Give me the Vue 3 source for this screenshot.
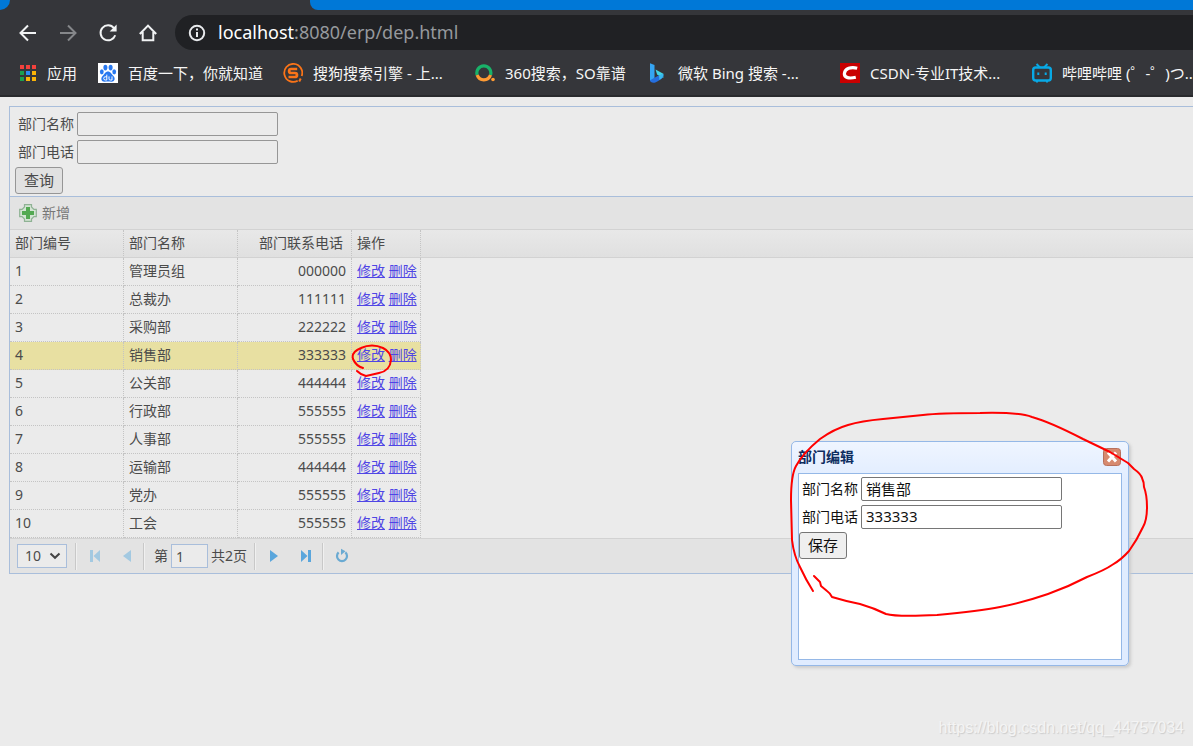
<script setup>
import { ref } from 'vue'

const departments = ref([
  { id: 1, name: '管理员组', tel: '000000' },
  { id: 2, name: '总裁办', tel: '111111' },
  { id: 3, name: '采购部', tel: '222222' },
  { id: 4, name: '销售部', tel: '333333' },
  { id: 5, name: '公关部', tel: '444444' },
  { id: 6, name: '行政部', tel: '555555' },
  { id: 7, name: '人事部', tel: '555555' },
  { id: 8, name: '运输部', tel: '444444' },
  { id: 9, name: '党办', tel: '555555' },
  { id: 10, name: '工会', tel: '555555' }
])
const selectedId = ref(4)
const query = ref({ name: '', tel: '' })
const edit = ref({ name: '销售部', tel: '333333' })
const page = ref('1')
const pageSize = ref('10')
</script>

<template>
  <div class="screen">
    <header class="chrome">
      <div class="tabstrip">
        <div class="tab-left"></div>
        <div class="tab-right"></div>
      </div>
      <div class="navbar">
        <button class="nav-btn" aria-label="后退">
          <svg width="20" height="20" viewBox="0 0 20 20" fill="none" stroke="#f1f3f4" stroke-width="2"><path d="M18 10H3M10 2.5 2.5 10 10 17.5" /></svg>
        </button>
        <button class="nav-btn" aria-label="前进">
          <svg width="20" height="20" viewBox="0 0 20 20" fill="none" stroke="#85878a" stroke-width="2"><path d="M2 10H17M10 2.5 17.5 10 10 17.5" /></svg>
        </button>
        <button class="nav-btn" aria-label="刷新">
          <svg width="20" height="20" viewBox="0 0 20 20" fill="none" stroke="#f1f3f4" stroke-width="2"><path d="M16 5.2A7.5 7.5 0 1 0 17.2 12.2" /><path d="M18.6 1.6V8.4H11.6Z" fill="#f1f3f4" stroke="none" /></svg>
        </button>
        <button class="nav-btn" aria-label="主页">
          <svg width="20" height="20" viewBox="0 0 20 20" fill="none" stroke="#f1f3f4" stroke-width="2"><path d="M1.8 11 10 2.6 18.2 11M4.7 9V17.2H15.3V9" /></svg>
        </button>
        <div class="omnibox">
          <svg width="18" height="18" viewBox="0 0 18 18" fill="none" stroke="#e8eaed" stroke-width="2"><circle cx="9" cy="9" r="7.2" /><path d="M9 8V13M9 4.6V6.6" /></svg>
          <span class="url"><b>localhost</b>:8080/erp/dep.html</span>
        </div>
      </div>
      <nav class="bookmarks">
        <a href="#" class="mark apps">
          <svg width="18" height="18" viewBox="0 0 18 18">
            <path fill="#f4413c" d="M1 1h4v4H1zM7 1h4v4H7zM13 1h4v4h-4z" />
            <path fill="#1aa050" d="M1 7h4v4H1zM1 13h4v4H1z" />
            <path fill="#2b8cf4" d="M7 7h4v4H7z" />
            <path fill="#fbb408" d="M13 7h4v4h-4zM7 13h4v4H7zM13 13h4v4h-4z" />
          </svg>
          <span>应用</span>
        </a>
        <a href="#" class="mark baidu">
          <svg width="20" height="20" viewBox="0 0 20 20">
            <path fill="#fff" d="M0 0h20v20H0z" />
            <g fill="#2878f0">
              <ellipse cx="7.4" cy="4.6" rx="2" ry="2.8" />
              <ellipse cx="12.6" cy="4.6" rx="2" ry="2.8" />
              <ellipse cx="3.8" cy="8.8" rx="1.9" ry="2.6" />
              <ellipse cx="16.2" cy="8.8" rx="1.9" ry="2.6" />
              <path d="M10 8.6C12.6 8.6 13.2 11 15.2 12.8 18 15.4 16.4 19 13.4 18.8 11 18.4 9 18.4 6.6 18.8 3.6 19 2 15.4 4.8 12.8 6.8 11 7.4 8.6 10 8.6Z" />
            </g>
            <path d="M8.8 11.6V17H7.3a1.5 1.5 0 0 1 0-3.2H8.8M11 13.4V15.9Q11 17 12.2 17H14V13.4" fill="none" stroke="#fff" />
          </svg>
          <span>百度一下，你就知道</span>
        </a>
        <a href="#" class="mark wide">
          <svg width="20" height="20" viewBox="0 0 20 20" fill="none" stroke="#fb7418">
            <path d="M18.7 13A9 9 0 1 0 14.7 17.7" stroke-width="1.8" />
            <path d="M14.2 6H8.1a2 2 0 0 0 0 4H12a2 2 0 0 1 0 4H5.5" stroke-width="2.7" />
            <path d="M16.2 18.5 17.7 15.5" stroke-width="2" />
          </svg>
          <span>搜狗搜索引擎 - 上...</span>
        </a>
        <a href="#" class="mark so">
          <svg width="20" height="20" viewBox="0 0 20 20" fill="none">
            <path d="M2.2 12A7 7 0 1 1 15.5 12" stroke="#19b269" stroke-width="3.2" />
            <path d="M2.2 12A7 7 0 0 0 15.5 12" stroke="#ff9b33" stroke-width="3.2" />
            <circle cx="18" cy="16.5" r="1.8" fill="#ff9b33" />
          </svg>
          <span>360搜索，SO靠谱</span>
        </a>
        <a href="#" class="mark wide">
          <svg width="20" height="20" viewBox="0 0 20 20">
            <path d="M2 .2 6.5 2V15.5L2 18Z" fill="#35a5f3" />
            <path d="M7.5 6.5 15.3 10.8V15L11.3 13 9.1 11.6Z" fill="#42d5e5" />
            <path d="M2 17.2 11.1 12.3 15.3 11.5C15.7 15 13.5 16 7.3 19.5 4.5 20.4 2 19 2 17.2Z" fill="#256fdf" />
            <path d="M10.9 12.5 15.3 10.8C15.5 14.2 14 15.6 11.5 17Z" fill="#38b9ee" />
          </svg>
          <span>微软 Bing 搜索 -...</span>
        </a>
        <a href="#" class="mark wide">
          <svg width="20" height="20" viewBox="0 0 20 20"><path fill="#c90000" d="M0 0h20v20H0z" /><path d="M17.2 5.2C11 3.6 5 5.4 4.4 10.4 3.8 15 9.5 15.8 15.8 14.3" fill="none" stroke="#fff" stroke-width="3.2" /></svg>
          <span>CSDN-专业IT技术...</span>
        </a>
        <a href="#" class="mark">
          <svg width="20" height="20" viewBox="0 0 20 20" fill="none" stroke="#08a9e5" stroke-width="2"><rect x="1.2" y="4.5" width="17.6" height="13" rx="2.5" stroke-width="2.4" /><path d="M4.5 1 8 4.5M15.5 1 12 4.5M6.3 9.5V12M13.7 9.5V12M4 18.4H6M14 18.4H16" /></svg>
          <span>哔哩哔哩 (゜-゜)つ...</span>
        </a>
      </nav>
    </header>

    <main class="desk">
      <section class="panel">
        <form class="search" @submit.prevent>
          <div class="field"><label for="q-name">部门名称</label><input id="q-name" v-model="query.name" type="text"></div>
          <div class="field"><label for="q-tel">部门电话</label><input id="q-tel" v-model="query.tel" type="text"></div>
          <button class="btn">查询</button>
        </form>
        <div class="toolbar">
          <button class="add">
            <svg width="18" height="18" viewBox="0 0 18 18"><path d="M5.5.7h7v2.2l2.4 2.5h2.4v7.2h-2.4l-2.4 2.5v2.2h-7v-2.2L3.1 12.6H.7V5.4h2.4l2.4-2.5Z" fill="#d4e4d4" stroke="#8fb294" stroke-width="1.2" /><path d="M7 3h4v4h4v4h-4v4H7v-4H3V7h4Z" fill="#53a952" /></svg>
            <span>新增</span>
          </button>
        </div>
        <div class="grid">
          <table>
            <thead>
              <tr><th class="col">部门编号</th><th class="col">部门名称</th><th class="col num">部门联系电话</th><th class="ops">操作</th></tr>
            </thead>
            <tbody>
              <tr v-for="d in departments" :key="d.id" :class="{ selected: d.id === selectedId }">
                <td>{{ d.id }}</td>
                <td>{{ d.name }}</td>
                <td class="num">{{ d.tel }}</td>
                <td class="ops">
                  <a href="#">修改</a> <a href="#">删除</a>
                  <svg v-if="d.id === selectedId" class="ring" width="44" height="38" viewBox="350 342 44 38"><path d="M363 368Q356 366 353 359 351 352 361 348 372 343 383 348 391 352 391 360 390 371 379 373L366 376Q361 375 357 371" /></svg>
                </td>
              </tr>
            </tbody>
          </table>
        </div>
        <footer class="pager">
          <div class="size">
            <select v-model="pageSize" aria-label="每页条数"><option>10</option><option>20</option></select>
            <svg width="12" height="8" viewBox="0 0 12 8"><path d="M1.5 1.5 6 5.8 10.5 1.5" fill="none" stroke="#444" stroke-width="2" /></svg>
          </div>
          <i class="sep"></i>
          <button disabled aria-label="首页"><svg width="16" height="16" viewBox="0 0 16 16" fill="#a3c9e1"><path d="M3 2h3v12H3zM13 2v12L6.5 8Z" /></svg></button>
          <button disabled aria-label="上一页"><svg width="16" height="16" viewBox="0 0 16 16" fill="#a3c9e1"><path d="M12 2v12L4 8Z" /></svg></button>
          <i class="sep"></i>
          <label class="page-no" for="page">第</label>
          <input id="page" v-model="page" class="page-input" type="text">
          <span class="total">共2页</span>
          <i class="sep"></i>
          <button aria-label="下一页"><svg width="16" height="16" viewBox="0 0 16 16" fill="#5aa6dc"><path d="M4 2v12l8-6Z" /></svg></button>
          <button aria-label="末页"><svg width="16" height="16" viewBox="0 0 16 16" fill="#5aa6dc"><path d="M3 2v12l6.5-6ZM10 2h3v12h-3z" /></svg></button>
          <i class="sep"></i>
          <button aria-label="重新加载"><svg width="16" height="16" viewBox="0 0 16 16"><path d="M4.6 4.4A5 5 0 1 0 11.4 4.4" fill="none" stroke="#6aaad2" stroke-width="2.2" /><path d="M7 .8V7L11.5 3.2Z" fill="#6aaad2" /></svg></button>
        </footer>
      </section>
    </main>

    <section class="dialog" role="dialog" aria-labelledby="dialog-title">
      <div class="dialog-head">
        <h2 id="dialog-title">部门编辑</h2>
        <button class="close" aria-label="关闭">
          <svg width="18" height="18" viewBox="0 0 18 18"><rect x=".5" y=".5" width="17" height="17" rx="3" fill="#d78a6f" stroke="#b8705c" /><path d="M5 4.5 13 13.5M13 4.5 5 13.5" stroke="#fff" stroke-width="3" /></svg>
        </button>
      </div>
      <form class="dialog-body" @submit.prevent>
        <div class="field"><label for="e-name">部门名称</label><input id="e-name" v-model="edit.name" type="text"></div>
        <div class="field"><label for="e-tel">部门电话</label><input id="e-tel" v-model="edit.tel" type="text"></div>
        <button class="btn">保存</button>
      </form>
      <svg class="loop" width="366" height="212" viewBox="786 408 366 212"><path d="M813 591Q806 580 800 567 794 556 792 540L791 500Q791 475 796 466 803 453 820 439 834 429 848 425 861 421 883 419L923 415Q940 413 980 413 1018 412 1032 417 1050 422 1083 439L1110 452 1128 463 1134 469Q1141 474 1142 478 1144 482 1144 487 1147 495 1147 507 1147 520 1143 527 1137 540 1129 551 1121 560 1112 565 1105 570 1087 577 1068 587 1048 594 1025 602 1000 607 980 611 937 615 897 617 886 614 874 608 860 604 845 601 832 597 830 593 827 591L821 586 820 582 814 576" /></svg>
    </section>

    <span class="watermark">https://blog.csdn.net/qq_44757034</span>
  </div>
</template>

<style>
html,
body {
  margin: 0;
  background: #ebebeb;
}
</style>

<style scoped>
* {
  box-sizing: border-box;
}

.screen {
  position: relative;
  min-height: 100vh;
  overflow: hidden;
  font: 14px/20px "Noto Sans", "Noto Sans CJK SC", sans-serif;
  color: #4b4b4b;
}

button,
input,
select {
  margin: 0;
  font: inherit;
  color: inherit;
}

svg {
  display: block;
  flex: none;
}

/* browser chrome */
.chrome {
  background: #35363a;
  border-bottom: 2px solid #292a2d;
}

.tabstrip {
  display: flex;
  justify-content: space-between;
  height: 10px;
  gap: 300px;
}

.tab-left {
  flex: none;
  width: 10px;
  background: #0078d7;
  border-bottom-right-radius: 10px;
}

.tab-right {
  flex: 1;
  background: #0078d7;
  border-bottom-left-radius: 8px;
}

.navbar {
  display: flex;
  align-items: center;
  height: 40px;
  padding: 5px 0 0 8px;
}

.nav-btn {
  display: flex;
  align-items: center;
  justify-content: center;
  width: 40px;
  height: 35px;
  padding: 0;
  border: 0;
  background: none;
}

.omnibox {
  display: flex;
  flex: 1;
  align-items: center;
  gap: 12px;
  height: 35px;
  margin-left: 7px;
  padding-left: 13px;
  border-radius: 18px 0 0 18px;
  background: #202124;
}

.url {
  padding-bottom: 2px;
  font: 18px/24px "Noto Sans", sans-serif;
  color: #96999d;
}

.url b {
  font-weight: 400;
  color: #fff;
}

.bookmarks {
  display: flex;
  align-items: center;
  gap: 20px;
  height: 45px;
  padding-left: 19px;
}

.mark {
  display: flex;
  flex: none;
  align-items: center;
  gap: 10px;
  font-size: 15px;
  color: #f6f6f6;
  text-decoration: none;
  white-space: nowrap;
}

.apps {
  width: 59px;
}

.baidu {
  width: 165px;
}

.wide {
  width: 172px;
}

.so {
  width: 153px;
}

/* page */
.desk {
  padding: 9px 0 0 9px;
}

.panel {
  border: solid #a9bedb;
  border-width: 1px 0 1px 1px;
}

.search {
  padding: 5px 5px 2px;
  border-bottom: 1px solid #a9bedb;
}

.field {
  display: flex;
  align-items: center;
  gap: 3px;
  height: 24px;
  margin-bottom: 4px;
  padding-left: 3px;
}

.field input {
  width: 201px;
  height: 24px;
  padding: 0 4px 2px;
  border: 1px solid #969696;
  border-radius: 2px;
  background: transparent;
  font-size: 15px;
}

.btn {
  display: block;
  width: 48px;
  height: 27px;
  margin-top: -1px;
  padding: 0 0 2px;
  border: 1px solid #969696;
  border-radius: 3px;
  background: #e1e1e1;
  font-size: 15px;
}

.toolbar {
  display: flex;
  align-items: center;
  height: 33px;
  padding-left: 9px;
  border-bottom: 1px solid #d2d2d2;
  background: #e3e3e3;
}

.add {
  display: flex;
  align-items: center;
  gap: 5px;
  padding: 0;
  border: 0;
  background: none;
  color: #777;
}

.grid {
  background: linear-gradient(#e8e8e8, #e0e0e0 27px, #d2d2d2 27px, #d2d2d2 28px, transparent 28px);
}

table {
  border-collapse: separate;
  border-spacing: 0;
  table-layout: fixed;
  width: 411px;
}

th,
td {
  height: 28px;
  padding: 0 5px 2px;
  border-right: 1px dotted #c4c4c4;
  border-bottom: 1px dotted #c4c4c4;
  font-weight: 400;
  text-align: left;
  white-space: nowrap;
}

th {
  border-bottom: 1px solid #d2d2d2;
}

.col {
  width: 114px;
}

.num {
  text-align: right;
}

th.num {
  padding-right: 8px;
}

.ops {
  position: relative;
}

td a {
  color: #4f46e5;
}

.selected td {
  background: #e8e0a2;
}

.ring {
  position: absolute;
  top: 0;
  left: -2px;
  z-index: 1;
}

.ring path,
.loop path {
  fill: none;
  stroke: #f00;
  stroke-width: 2;
  stroke-linecap: round;
  stroke-linejoin: round;
}

.pager {
  display: flex;
  align-items: center;
  height: 35px;
  padding-left: 7px;
  border-top: 1px solid #d2d2d2;
  background: #e3e3e3;
}

.size {
  display: grid;
  align-items: center;
  width: 50px;
  margin-right: 8px;
}

.size > * {
  grid-area: 1 / 1;
}

.size svg {
  justify-self: end;
  margin-right: 6px;
  pointer-events: none;
}

.size select {
  width: 50px;
  height: 24px;
  padding: 0 7px;
  border: 1px solid #a9bedb;
  border-radius: 0;
  appearance: none;
  background: #ebebeb;
}

.pager button {
  display: flex;
  align-items: center;
  justify-content: center;
  width: 32px;
  height: 24px;
  padding: 0;
  border: 0;
  background: none;
}

.sep {
  width: 2px;
  height: 27px;
  margin-right: 2px;
  border-left: 1px solid #c8c8c8;
  border-right: 1px solid #f0f0f0;
}

.page-no {
  margin: 0 3px 0 7px;
}

.page-input {
  width: 37px;
  height: 24px;
  padding: 0 4px;
  border: 1px solid #a9bedb;
  background: #ebebeb;
}

.total {
  margin: 0 7px 0 3px;
}

/* floating edit window */
.dialog {
  position: absolute;
  top: 441px;
  left: 791px;
  display: flex;
  flex-direction: column;
  width: 338px;
  height: 225px;
  padding: 0 6px 5px;
  border: 1px solid #95b8e7;
  border-radius: 5px;
  background: linear-gradient(#eff5ff, #e0ecff 40px);
  box-shadow: 2px 2px 3px #ccc;
  color: #111;
}

.dialog-head {
  display: flex;
  align-items: center;
  justify-content: space-between;
  height: 31px;
  padding: 0 1px 2px 0;
}

.dialog-head h2 {
  margin: 0;
  font-size: 14px;
  line-height: 20px;
  color: #0e2d5f;
}

.close {
  padding: 0;
  border: 0;
  background: none;
}

.dialog-body {
  flex: 1;
  padding-top: 3px;
  border: 1px solid #95b8e7;
  background: #fff;
}

.dialog-body .field input,
.dialog-body .btn {
  border-color: #767676;
}

.dialog-body .btn {
  background: #efefef;
}

.loop {
  position: absolute;
  top: -34px;
  left: -6px;
  pointer-events: none;
}

.watermark {
  position: absolute;
  right: 9px;
  bottom: 8px;
  font: 16px/20px "Liberation Sans", Arial, sans-serif;
  color: #f4f4f4;
  text-shadow: 1px 1px 1px #ccc;
}
</style>
